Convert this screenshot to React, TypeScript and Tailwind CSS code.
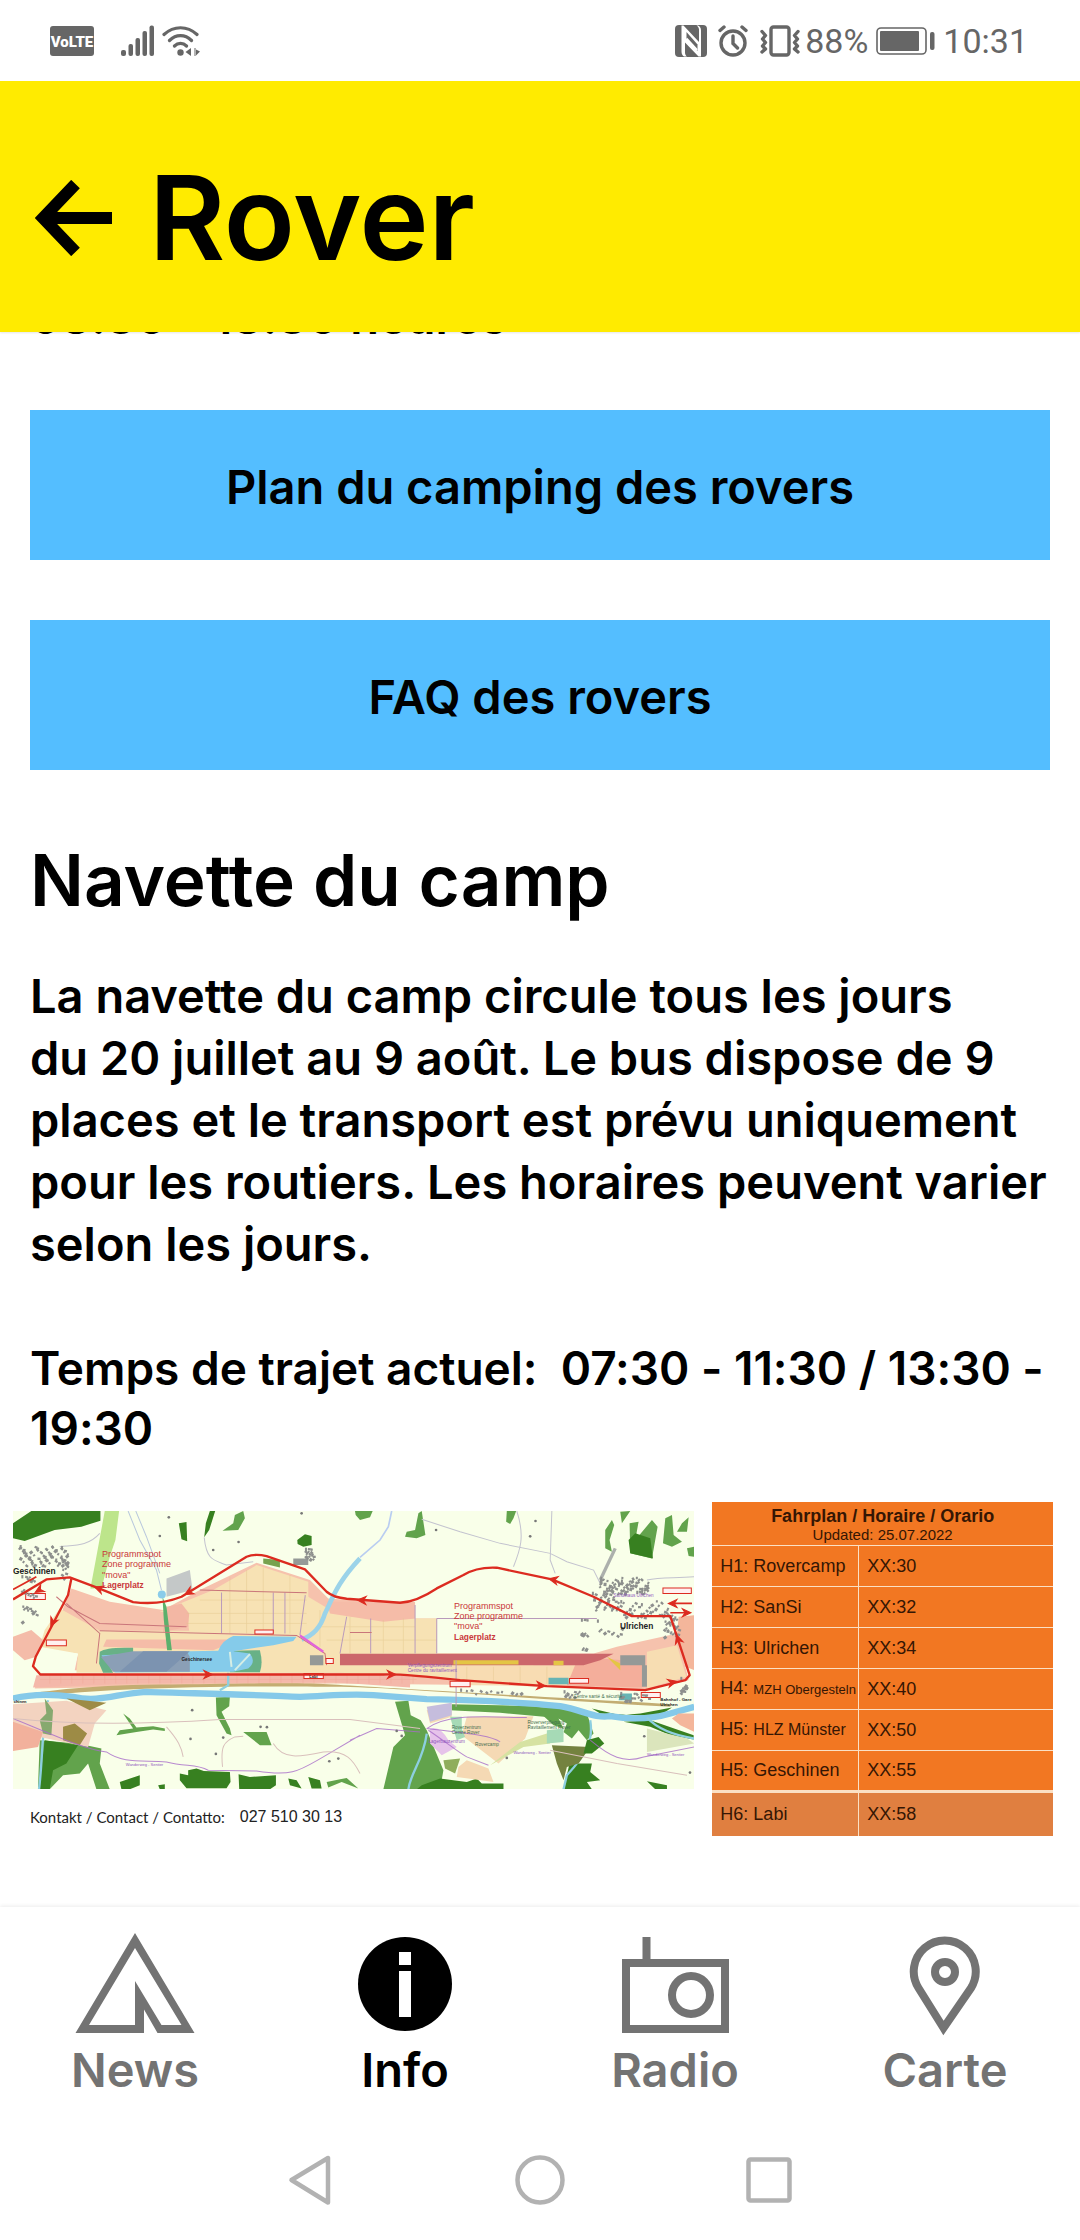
import type { ReactNode } from "react";

const green = "#62a34c";
const darkGreen = "#378020";
const route = "#dc2b20";

function StatusBar() {
  return (
    <div className="flex h-[81px] items-center justify-between pl-[50px] pr-[52px] text-[#666]">
      <div className="flex items-center">
        <svg viewBox="0 0 44 30" className="h-[30px] w-[44px]" role="img" aria-label="VoLTE">
          <rect width="44" height="30" rx="3" fill="currentColor" />
          <text x="22" y="21" textAnchor="middle" fontSize="15" fontWeight="900" fill="#fff" fontFamily="Roboto, sans-serif">
            VoLTE
          </text>
        </svg>
        <svg viewBox="0 0 33 32" className="ml-[27px] h-[32px] w-[33px]" fill="currentColor" aria-hidden="true">
          <rect x="0" y="25" width="5" height="6" rx="2" />
          <rect x="7.5" y="19" width="4.500" height="12" rx="2" />
          <rect x="14.500" y="13" width="4.500" height="18" rx="2" />
          <rect x="21.500" y="6" width="4.500" height="25" rx="2" />
          <rect x="28.500" y="0.500" width="4.500" height="30.500" rx="2" />
        </svg>
        <svg viewBox="0 0 38 32" className="ml-[8px] h-[32px] w-[38px]" fill="none" stroke="currentColor" strokeWidth="3.200" strokeLinecap="round" aria-hidden="true">
          <path d="M2 9.500C12 0.500 25 0.500 35 9.500M7.500 15.500C14 9 23 9 29.500 15.500M12.500 21C16 17.500 21 17.500 24.500 21" />
          <circle cx="18.500" cy="27.500" r="3.200" fill="currentColor" stroke="none" />
          <path d="M29 23v8l-5.500-4zM32.500 23h1v8h-1zM34 24.500v6l4-4z" fill="currentColor" stroke="none" />
        </svg>
      </div>
      <div className="flex items-center font-['Roboto',sans-serif] text-[34px] leading-none">
        <svg viewBox="0 0 32 32" className="h-[32px] w-[32px]" aria-hidden="true">
          <rect width="32" height="32" rx="4" fill="currentColor" />
          <path d="M6.500 0.500h2L24 17V4.500C24 3 23 1.500 21.500 0.500H23C25 1.500 26 3 26 5.500V31.500H23.500L10 17.500V27.500C10 29.500 11 31 12 31.500H9C7.500 30.500 6.500 29 6.500 26.500Z" fill="#fff" />
          <path d="M11.500 7L22.500 19.500V26L11.500 14Z" fill="currentColor" />
          <path d="M11.500 13.500L22 25" stroke="#fff" strokeWidth="2" />
        </svg>
        <svg viewBox="0 0 30 32" className="ml-[11px] h-[32px] w-[30px]" fill="none" stroke="currentColor" strokeWidth="3.400" strokeLinecap="round" aria-hidden="true">
          <circle cx="15" cy="18" r="12" />
          <path d="M2 5.500l4-3.500M28 5.500L24 2M15 11v7.500l4.500 4.500" />
        </svg>
        <svg viewBox="0 0 40 32" className="ml-[12px] h-[32px] w-[40px]" fill="none" stroke="currentColor" strokeWidth="3.400" strokeLinecap="round" strokeLinejoin="round" aria-hidden="true">
          <rect x="11" y="2" width="18" height="28" rx="2.500" />
          <path d="M2 6.500l3.500 4-3 3.500 3 3.500-3 3.500 3 3-3.500 3M38 6.500l-3.500 4 3 3.500-3 3.500 3 3.500-3 3 3.500 3" />
        </svg>
        <span className="ml-[5px]">88%</span>
        <svg viewBox="0 0 59 28" className="ml-[8px] h-[28px] w-[59px]" fill="none" aria-hidden="true">
          <rect x="1" y="1" width="49" height="26" rx="4" stroke="currentColor" strokeWidth="1.600" />
          <rect x="4" y="4" width="39" height="20" rx="1" fill="currentColor" />
          <rect x="54" y="5" width="4.500" height="18" rx="2" fill="currentColor" />
        </svg>
        <span className="ml-[8px]">10:31</span>
      </div>
    </div>
  );
}

function Arrow({ x, y, angle }: { x: number; y: number; angle: number }) {
  return <path d="M-22 -12L4 0L-22 12L-14 0Z" transform={`translate(${x} ${y}) rotate(${angle})`} fill={route} stroke={route} strokeWidth="3" />;
}

function Houses({ points }: { points: number[][] }) {
  return (
    <g fill="#8d8f8d">
      {points.map(([x, y], i) => (
        <rect key={i} x={x} y={y} width={i % 2 ? 9 : 6} height={i % 3 ? 7 : 10} transform={`rotate(${(i * 37) % 60} ${x} ${y})`} />
      ))}
    </g>
  );
}

function scatter(x: number, y: number, w: number, h: number, count: number) {
  return Array.from({ length: count }, (_, i) => [x + ((i * 61.8) % w), y + ((i * 38.2 + (i % 5) * 7) % h)]);
}

function CampMap() {
  return (
    <svg viewBox="40 93 2042 834" className="block w-full" role="img" aria-label="Plan de la navette" fontFamily="'Liberation Sans', Arial, sans-serif">
      <rect x="40" y="93" width="2042" height="834" fill="#f9ffe9" />
      <path d="M40 130L95 93H302V122L245 140L165 150L75 183L40 175Z" fill={darkGreen} />
      <path d="M315 93H358L347 180L330 230L305 325H272L288 240Z" fill="#bde58b" />
      <g fill={green}>
        <path d="M705 105L730 93L735 115L715 150L668 152L700 130ZM1065 93H1118L1110 112L1080 120L1067 105ZM1255 100L1265 93L1276 165L1250 175L1215 170L1220 155L1245 150ZM1520 93H1548L1540 115L1530 132L1518 125ZM1815 150L1835 120L1842 135L1828 180L1835 215L1815 205ZM1860 95L1890 93L1865 130ZM1888 130L1915 125L1905 180L1955 120L1972 140L1955 235L1890 220ZM1995 115L2015 105L2020 165L2045 185L2015 200L1988 190ZM2045 130L2065 112L2060 155L2030 155ZM2060 205L2082 200V230L2065 228Z" />
        <path d="M120 780L235 790L305 805L300 850L330 927H290L265 850L240 880L190 885L150 927L115 920ZM648 652L690 650L688 678L665 695L690 745L695 765L680 760L650 705ZM730 755L800 755L815 795L780 795ZM980 905L1040 893L1075 925L1025 905L985 922ZM1185 665L1225 662L1232 705L1262 720L1280 750L1330 870L1320 927H1150L1180 800L1215 765ZM1355 672L1600 678L1690 700V715L1500 698L1350 690Z" />
        <path d="M1600 680L1700 685L1760 700L1780 760L1760 780L1735 750L1715 775L1690 755L1700 730L1675 715L1690 745L1660 735Z" />
        <path d="M350 765L360 750L400 745L370 700L390 715L410 742L460 738L495 745V752L460 748L410 755Z" />
      </g>
      <g fill={darkGreen}>
        <path d="M537 130L560 126L562 184L545 178ZM630 93H646L628 150L613 172L618 130ZM892 180L915 163L935 168V195L910 200L893 192Z" />
        <path d="M1885 180L1905 160L1950 175L1958 235L1890 220ZM135 780L235 795L200 850L160 870L150 927H118ZM540 880L565 885L565 870L590 865L612 872L690 875L692 905L680 924H560L540 900ZM716 882L750 890L828 885V915L810 927H718ZM360 905L420 885V915L390 927H365ZM865 895L890 900L905 925L870 915ZM925 890L960 900L965 925H935ZM1708 850L1775 850L1770 875L1800 900L1760 905L1775 927H1690ZM1940 903L2000 915V927H1965ZM475 915L495 912V927H480Z" />
        <path d="M1265 915L1320 895L1400 905L1430 895L1445 910L1510 910V927H1250ZM1775 685L1860 705L1920 700L2015 682L1975 708L1800 700ZM1870 725L1950 720L2080 765V778L2010 765L1950 740Z" />
      </g>
      <path d="M215 325L330 365L490 390L600 330L770 248L930 300L985 355L1080 362L1245 375V415L1310 415V520L1780 520L1850 500L2030 460L2065 600L1930 630L1500 615L1000 610L105 625L120 585L1035 578L300 575L225 570L235 520L165 500L190 385Z" fill="#f6c2ad" />
      <path d="M180 385L300 452H1240V415H1310V520H1600V610L1250 590L1020 578H230L235 520L120 500L135 450Z" fill="#f7e2b4" />
      <path d="M105 520L235 520L220 578H130L100 558Z" fill="#f9ffe9" />
      <path d="M480 395L640 330L770 255L925 305V465H570L560 400Z" fill="#f7e2b4" />
      <path d="M916 345L975 380L1055 410L1245 415V520L1000 520L920 460Z" fill="#f7e2b4" />
      <path d="M980 365H1245V415L1150 425L990 400ZM320 478H720L640 510L310 500Z" fill="#f5bca8" />
      <path d="M500 380L545 370L568 400L565 440L490 455Z" fill="#f3b7a4" />
      <path d="M1350 555H1735L1700 615H1350Z" fill="#f8dcb2" />
      <path d="M1735 530L1925 545V622L1700 615Z" fill="#f4ae9b" />
      <path d="M1940 515L2030 495L2058 590L1940 625Z" fill="#f7ddb2" />
      <path d="M1020 521H1840L1800 540L1750 555H1020Z" fill="#cc676b" />
      <path d="M1360 540H1555V553H1360ZM1660 542H1690V555H1660ZM1820 530L1860 550V570Z" fill="#e4c544" />
      <path d="M1050 583L1230 585V615L1050 608Z" fill="#f3a898" />
      <path d="M110 585L1080 583L1230 585V622L1000 606L420 610L100 622Z" fill="#f4b8aa" />
      <g stroke="#ef9483" strokeWidth="1" opacity="0.6">
        {Array.from({ length: 34 }, (_, i) => (
          <path key={i} d={`M${150 + i * 33} 586v24`} />
        ))}
        <path d="M120 598H1250" />
      </g>
      <g stroke="#e3c58b" strokeWidth="2" opacity="0.6">
        <path d="M690 290V460M740 270V460M790 262V460M870 285V460M600 360H920M560 400H920M560 430H920M960 390V500M1050 410V520M1150 420V520M1210 415V520M950 440H1245M980 480H1310M1400 560V600M1480 560V605M1560 560V610M1640 560V612" />
      </g>
      <path d="M500 295L570 270L578 330L500 350Z" fill="#c4c8c8" />
      <path d="M300 515Q320 500 400 503V525L320 540L340 578H310L298 550Z" fill="#68b187" />
      <path d="M700 512L780 510Q790 550 780 576H690Z" fill="#68b187" />
      <path d="M305 525L570 513L655 512Q668 480 700 468L890 470L880 483L820 495L700 513L750 520Q770 545 745 565L700 575L345 577Z" fill="#85cbea" />
      <path d="M303 530L400 513H560L570 530V575H340Z" fill="#8b9fb6" />
      <path d="M430 513L570 513L500 575H360Z" fill="#7c93b0" />
      <path d="M705 570L750 522M690 515L695 560" stroke="#d6eee5" strokeWidth="6" />
      <path d="M488 350L500 380L516 510H502L492 420Z" fill="#5bb06c" />
      <circle cx="486" cy="343" r="12" fill="#8accea" />
      <path d="M1080 235C1010 310 1000 350 975 400C960 450 930 470 905 478" fill="none" stroke="#9bd3e9" strokeWidth="14" />
      <path d="M1080 232L1140 180L1165 140L1175 93" fill="none" stroke="#b9cdf1" strokeWidth="5" />
      <path d="M385 93L420 180L470 270L485 330M408 93L440 170L480 280" fill="none" stroke="#b9c8dd" strokeWidth="3" />
      <path d="M300 160C265 200 220 195 180 200M613 172C620 240 640 240 680 255L760 245M1265 118L1380 155L1500 190L1650 220L1700 245L1780 270L1800 310M1550 93C1575 170 1560 210 1540 260M1655 93L1650 240L1665 280M2082 290C2020 295 1980 290 1940 300" fill="none" stroke="#c3c3cf" strokeWidth="3" />
      <path d="M1845 205L1800 300" stroke="#acb0ac" strokeWidth="10" />
      <path d="M40 648C110 636 250 615 480 613S900 606 1000 613S1500 642 2010 672V680C1500 650 1200 622 1000 620S300 615 40 660Z" fill="#c3ad72" />
      <path d="M40 655C100 640 160 642 220 650C300 668 350 640 440 635C600 640 800 645 900 650C1000 646 1050 640 1120 645L1280 657C1420 660 1560 665 1680 678C1750 690 1780 715 1830 708C1900 720 1960 715 2010 700L2082 680" fill="none" stroke="#85c9e9" strokeWidth="19" />
      <path d="M1940 712C1970 745 2020 765 2082 775M1770 720C1780 780 1760 820 1700 885L1690 927M145 660C125 750 130 830 118 927M1280 760C1270 840 1230 880 1225 927M685 578V615L660 630" fill="none" stroke="#8dcfe0" strokeWidth="7" />
      <path d="M40 672L200 662L320 690L285 730L265 800L120 770L40 730Z" fill="#f3d3c0" />
      <path d="M40 725L130 755L115 800L40 812Z" fill="#f2b19c" />
      <path d="M200 655L320 668L270 690ZM190 740L225 730L262 760L240 795L190 780Z" fill="#9d8b45" />
      <path d="M135 655L160 690L155 765L130 760L120 720L140 700Z" fill="#87a96f" />
      <path d="M40 470L95 450L130 480L110 530L75 540L40 510Z" fill="#f4bca9" />
      <path d="M1280 690L1355 672V710L1290 730ZM1400 710L1600 708L1575 775L1495 850L1385 765ZM1375 860L1400 840L1465 865L1480 905L1370 890Z" fill="#f5d9b4" />
      <path d="M1280 680L1355 668V705L1290 725Z" fill="#c5bddd" />
      <path d="M1470 855L1560 785L1640 760L1650 790L1570 800Z" fill="#d6e2a2" />
      <path d="M1330 840L1380 835L1365 880L1335 865Z" fill="#8fae5c" />
      <path d="M1655 795L1770 800L1735 850L1700 860L1690 900L1670 850Z" fill="#74823f" />
      <path d="M1760 780L1795 770L1812 790L1775 820L1750 820Z" fill={darkGreen} />
      <path d="M1640 750L1690 745V785L1640 790ZM1350 710H1385V745L1395 770L1370 780Z" fill="#a6dab6" />
      <path d="M1290 745Q1320 735 1345 780L1370 800L1325 825L1290 790Z" fill="#e6c3ea" />
      <path d="M2035 700H2082V755L2040 735L2015 715ZM2035 410L2082 405V570L2055 560L2030 460Z" fill="#f4b69b" />
      <path d="M1940 745L2060 775L2082 790L1940 815Z" fill="#dbe5bc" />
      <g fill="none" stroke="#a86cc9" strokeWidth="3" opacity="0.8">
        <path d="M40 715C150 760 260 810 320 815C370 850 420 840 500 845C560 860 590 850 625 870L770 872C880 890 900 870 970 830L1080 765M1050 780L1130 745L1260 755M1280 745C1400 760 1470 765 1500 785M1770 780C1830 830 1870 850 1930 830L2082 800" />
        <path d="M1280 745C1340 700 1440 710 1580 712M1285 750C1330 780 1380 820 1400 830L1465 855" />
      </g>
      <path d="M668 860C662 800 670 785 705 770L730 768M40 715C180 730 400 735 660 718H1050L1260 745M500 740C535 780 545 800 550 830M820 790C850 840 900 830 970 815C1040 810 1060 840 1080 880M1650 810L1850 850L2060 885" fill="none" stroke="#d9c0bc" strokeWidth="3" />
      <path d="M665 337V460M820 337V460M855 337V460M916 345L900 465M1112 415V520M1245 375V520M1368 540V680M1310 415V520M1310 415H1790M1040 410L1020 520" fill="none" stroke="#b99abb" strokeWidth="3" />
      <path d="M600 330L920 338M300 452L890 466L975 520L980 555M170 350L205 380L300 430L560 440M200 370L300 460L290 550M1050 457H1115" fill="none" stroke="#c9757a" strokeWidth="3" />
      <path d="M900 466L970 515" stroke="#e264d9" strokeWidth="7" />
      <path d="M930 525H970V555H930ZM880 235H925V255H880ZM1860 525H1935V555H1860ZM1925 555H1940V620H1925Z" fill="#959997" />
      <path d="M790 235L840 240V262L790 250Z" fill="#77a24f" />
      <path d="M1645 593H1705V612H1645ZM1860 640H1895V660H1855Z" fill="#67b4b4" />
      <g fill="#fff0f0" stroke={route} strokeWidth="3">
        <path d="M78 340H137V358H78ZM140 480H200V497H140ZM912 580H970V595H912ZM978 535H1000V550H978ZM1350 603H1410V620H1350ZM1708 595H1765V609H1708ZM1923 637H1980V652H1923ZM1988 324H2073V340H1988ZM765 450H820V462H765Z" />
      </g>
      <Houses points={scatter(60, 195, 150, 60, 64)} />
      <Houses points={scatter(65, 285, 60, 140, 26)} />
      <Houses points={scatter(185, 235, 60, 60, 12)} />
      <Houses points={scatter(915, 203, 60, 38, 15)} />
      <Houses points={scatter(1800, 290, 150, 50, 70)} />
      <Houses points={scatter(1775, 335, 80, 55, 26)} />
      <Houses points={scatter(1860, 360, 150, 50, 36)} />
      <Houses points={scatter(1990, 400, 60, 70, 26)} />
      <Houses points={scatter(1742, 415, 20, 95, 12)} />
      <Houses points={scatter(1790, 418, 80, 50, 10)} />
      <Houses points={scatter(1690, 630, 50, 20, 10)} />
      <Houses points={scatter(1860, 635, 90, 25, 16)} />
      <Houses points={scatter(2040, 590, 30, 50, 12)} />
      <Houses points={scatter(1380, 625, 200, 14, 12)} />
      <g fill="#777">
        {[[507, 112], [480, 168], [716, 186], [640, 210], [905, 100], [577, 690], [572, 776], [648, 821], [670, 772], [782, 740], [801, 741], [988, 843], [1015, 835], [1308, 150], [1590, 169], [1606, 123], [1520, 833], [1932, 768], [2069, 877], [1190, 752], [1205, 767]].map(([x, y]) => (
          <circle key={`${x}-${y}`} cx={x} cy={y} r="4" />
        ))}
      </g>
      <g fill="none" stroke={route} strokeWidth="7" strokeLinejoin="round">
        <path d="M40 358L140 298L210 292L290 322L400 366Q480 376 545 350L740 230Q765 220 800 228L915 268L980 335Q1000 352 1040 356L1200 368Q1250 365 1310 325L1390 285Q1430 260 1490 263L1655 298L1780 350L1895 408H2010L2068 585L2055 600L1935 630L1640 618L1380 600Q1200 580 1150 583H122L100 558L108 530L205 345L215 295" />
        <path d="M40 328L110 290M2010 370H2075M2010 398H2068" strokeWidth="5" />
      </g>
      <Arrow x={288} y={322} angle={200} />
      <Arrow x={558} y={342} angle={150} />
      <Arrow x={110} y={335} angle={150} />
      <Arrow x={155} y={435} angle={115} />
      <Arrow x={634} y={583} angle={0} />
      <Arrow x={1184} y={583} angle={0} />
      <Arrow x={1076} y={360} angle={183} />
      <Arrow x={1650} y={297} angle={192} />
      <Arrow x={1632} y={617} angle={3} />
      <Arrow x={2025} y={604} angle={-14} />
      <Arrow x={2030} y={468} angle={-108} />
      <Arrow x={2008} y={370} angle={180} />
      <Arrow x={2068} y={398} angle={0} />
      <g fill="#c9383a" fontSize="27">
        <text x="307" y="231">Programmspot</text>
        <text x="307" y="262">Zone programme</text>
        <text x="307" y="293">"mova"</text>
        <text x="307" y="324" fontWeight="700" fontSize="25">Lagerplatz</text>
        <text x="1362" y="387">Programmspot</text>
        <text x="1362" y="417">Zone programme</text>
        <text x="1362" y="448">"mova"</text>
        <text x="1362" y="479" fontWeight="700" fontSize="25">Lagerplatz</text>
      </g>
      <g fill="#222" fontWeight="700">
        <text x="40" y="283" fontSize="25">Geschinen</text>
        <text x="1859" y="448" fontSize="25">Ulrichen</text>
        <text x="42" y="668" fontSize="12">chinen</text>
        <text x="545" y="544" fontSize="14">Geschinersee</text>
        <text x="1980" y="662" fontSize="13">Bahnhof - Gare</text>
        <text x="1980" y="677" fontSize="13">Ulrichen</text>
        <text x="928" y="593" fontSize="12">Labi</text>
      </g>
      <g fill="#8f55bd" fontSize="14">
        <text x="1840" y="352">Schulhaus Ulrichen</text>
        <text x="1223" y="560">Verpflegungszentrum</text>
        <text x="1223" y="576">Centre du ravitaillement</text>
        <text x="1285" y="787">Lagerbauzentrum</text>
        <text x="378" y="858" fontSize="12">Wanderweg - Sentier</text>
        <text x="1540" y="822" fontSize="12">Wanderweg - Sentier</text>
        <text x="1940" y="826" fontSize="12">Wanderweg - Sentier</text>
      </g>
      <g fill="#3f6d4d" fontSize="14">
        <text x="1355" y="745">Roverzentrum</text>
        <text x="1355" y="760">Centre Rover</text>
        <text x="1582" y="730">Roververpflegung</text>
        <text x="1582" y="745">Ravitaillement Rover</text>
        <text x="1425" y="797">Rovercamp</text>
        <text x="1720" y="653">Centre santé &amp; sécurité</text>
      </g>
    </svg>
  );
}

const stops: { id: string; name: string; time: string; size: string }[] = [
  { id: "H1:", name: "Rovercamp", time: "XX:30", size: "text-[18px]" },
  { id: "H2:", name: "SanSi", time: "XX:32", size: "text-[18px]" },
  { id: "H3:", name: "Ulrichen", time: "XX:34", size: "text-[18px]" },
  { id: "H4:", name: "MZH Obergesteln", time: "XX:40", size: "text-[13px]" },
  { id: "H5:", name: "HLZ Münster", time: "XX:50", size: "text-[16px]" },
  { id: "H5:", name: "Geschinen", time: "XX:55", size: "text-[18px]" },
  { id: "H6:", name: "Labi", time: "XX:58", size: "text-[18px]" },
];

function Timetable() {
  return (
    <table className="w-full border-collapse bg-[#f27722] font-['Liberation_Sans',Arial,sans-serif] text-[18px] leading-[20px] text-[#351604]">
      <thead>
        <tr>
          <th colSpan={2} className="h-[43px] p-0 pt-[3px] font-normal">
            <span className="block font-bold">Fahrplan / Horaire / Orario</span>
            <span className="block text-[15px] leading-[18px]">Updated: 25.07.2022</span>
          </th>
        </tr>
      </thead>
      <tbody>
        {stops.map((s) => (
          <tr key={s.name} className="h-[41px] border-t border-[#fbe0c4] last:h-[45px] last:border-t-[3px] last:bg-[#e07f40]">
            <td className="w-[43%] whitespace-nowrap border-r border-[#fbe0c4] py-0 pl-2 pr-0">
              {s.id} <span className={s.size}>{s.name}</span>
            </td>
            <td className="py-0 pl-2">{s.time}</td>
          </tr>
        ))}
      </tbody>
    </table>
  );
}

function Tab({ label, active, children }: { label: string; active?: boolean; children: ReactNode }) {
  return (
    <a href="#" aria-current={active ? "page" : undefined} className={`flex flex-1 flex-col items-center gap-1 ${active ? "text-black" : "text-[#737373]"}`}>
      {children}
      <span className="text-[47px] font-semibold leading-[56px]">{label}</span>
    </a>
  );
}

export default function App() {
  return (
    <div className="flex min-h-screen flex-col bg-white font-['Inter',sans-serif] text-black [font-feature-settings:'calt'_0]">
      <StatusBar />
      <header className="z-10 flex h-[251px] items-center bg-[#ffeb00] px-[35px] pt-[22px] shadow-[0_1px_2px_rgba(0,0,0,0.1)]">
        <button type="button" aria-label="Retour">
          <svg viewBox="0 0 77 76" className="h-[76px] w-[77px]" fill="none" stroke="currentColor" strokeWidth="12" aria-hidden="true">
            <path d="M77 38H10M40.500 4L8 38l32.500 34" />
          </svg>
        </button>
        <h1 className="ml-[37px] text-[117px] font-semibold leading-none">Rover</h1>
      </header>

      <main className="flex flex-1 flex-col overflow-hidden text-[47px] font-semibold leading-[62px]">
        <p className="-mt-[46px] px-[30px]">08:30 - 18:30 heures</p>
        <div className="mt-[62px] flex flex-col gap-[60px] px-[30px]">
          <button type="button" className="h-[150px] bg-[#54beff] pt-[3px]">Plan du camping des rovers</button>
          <button type="button" className="h-[150px] bg-[#54beff] pt-[3px]">FAQ des rovers</button>
        </div>
        <h2 className="mt-[68px] px-[30px] text-[71px] leading-[84px]">Navette du camp</h2>
        <p className="mt-[43px] px-[30px]">
          La navette du camp circule tous les jours
          <br />
          du 20 juillet au 9 août. Le bus dispose de 9 places et le transport est prévu uniquement pour les routiers. Les horaires peuvent varier selon les jours.
        </p>
        <p className="mt-[63px] px-[30px] text-[46px] leading-[60px]">Temps de trajet actuel:&nbsp; 07:30 - 11:30 / 13:30 - 19:30</p>
        <div className="mt-[44px] flex gap-[18px] pl-[13px] pr-[27px] font-normal">
          <figure className="flex-[2] pt-[9px]">
            <CampMap />
            <figcaption className="flex gap-[15px] pl-[17px] pt-[16px] text-[16px] leading-[24px] text-[#222]">
              <span className="font-['Lato',sans-serif] text-[15px]">Kontakt / Contact / Contatto:</span>
              <span className="font-['Liberation_Sans',Arial,sans-serif]">027 510 30 13</span>
            </figcaption>
          </figure>
          <div className="flex-1">
            <Timetable />
          </div>
        </div>
      </main>

      <nav className="flex bg-white pb-[2px] pt-[23px] shadow-[0_-1px_4px_rgba(0,0,0,0.08)]">
        <Tab label="News">
          <svg viewBox="0 0 120 108" className="h-[108px] w-[120px]" fill="currentColor" aria-hidden="true">
            <path fillRule="evenodd" d="M60 3L119.500 103H82.500L69 79.500V103H0.500ZM60 18L14 95H60V51L86.500 95H106.500Z" />
          </svg>
        </Tab>
        <Tab label="Info" active>
          <svg viewBox="0 0 120 108" className="h-[108px] w-[120px]" aria-hidden="true">
            <circle cx="60" cy="54" r="47" fill="currentColor" />
            <path d="M54 22h12v13H54zM54 41h12v46H54z" fill="#fff" />
          </svg>
        </Tab>
        <Tab label="Radio">
          <svg viewBox="0 0 120 108" className="h-[108px] w-[120px]" fill="none" stroke="currentColor" strokeWidth="8" aria-hidden="true">
            <path d="M11 33H110V99H11zM31.500 33V7" />
            <circle cx="76" cy="65" r="19" />
          </svg>
        </Tab>
        <Tab label="Carte">
          <svg viewBox="0 0 120 108" className="h-[108px] w-[120px]" fill="none" stroke="currentColor" strokeWidth="8" aria-hidden="true">
            <path d="M58.500 98L33.500 58A31 31 0 1 1 86 58Z" />
            <circle cx="60" cy="42" r="10" />
          </svg>
        </Tab>
      </nav>
      <div className="flex h-[140px] items-center justify-center gap-[181px] bg-white pt-[19px] text-[#b2b2b2]">
        <button type="button" aria-label="Retour système">
          <svg viewBox="0 0 46 52" className="h-[52px] w-[46px]" fill="none" stroke="currentColor" strokeWidth="4.500" strokeLinejoin="round" aria-hidden="true">
            <path d="M40 4V48.500L3.500 26Z" />
          </svg>
        </button>
        <button type="button" aria-label="Accueil">
          <svg viewBox="0 0 50 50" className="h-[50px] w-[50px]" fill="none" stroke="currentColor" strokeWidth="4.500" aria-hidden="true">
            <circle cx="25" cy="25" r="22.500" />
          </svg>
        </button>
        <button type="button" aria-label="Applications récentes">
          <svg viewBox="0 0 46 46" className="h-[46px] w-[46px]" fill="none" stroke="currentColor" strokeWidth="4.500" aria-hidden="true">
            <rect x="2.500" y="2.500" width="41" height="41" rx="2" />
          </svg>
        </button>
      </div>
    </div>
  );
}
